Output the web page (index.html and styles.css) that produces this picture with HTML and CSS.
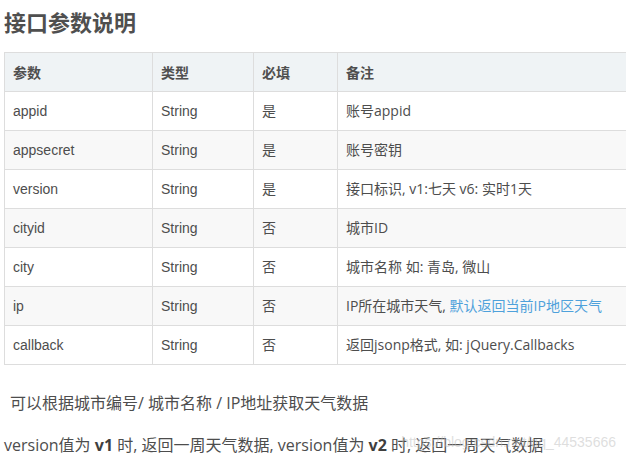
FILE: index.html
```html
<!DOCTYPE html>
<html lang="zh-CN">
<head>
<meta charset="utf-8">
<title>接口参数说明</title>
<link rel="stylesheet" href="styles.css">
</head>
<body>
<div class="page">
  <h3 class="title">接口参数说明</h3>
  <div class="table-wrap">
    <table class="params">
      <thead>
        <tr><th class="c1">参数</th><th class="c2">类型</th><th class="c3">必填</th><th class="c4">备注</th></tr>
      </thead>
      <tbody>
        <tr><td>appid</td><td>String</td><td>是</td><td class="note">账号appid</td></tr>
        <tr><td>appsecret</td><td>String</td><td>是</td><td class="note">账号密钥</td></tr>
        <tr><td>version</td><td>String</td><td>是</td><td class="note">接口标识, v1:七天 v6: 实时1天</td></tr>
        <tr><td>cityid</td><td>String</td><td>否</td><td class="note">城市ID</td></tr>
        <tr><td>city</td><td>String</td><td>否</td><td class="note">城市名称 如: 青岛, 微山</td></tr>
        <tr><td>ip</td><td>String</td><td>否</td><td class="note">IP所在城市天气, <a class="link" href="#">默认返回当前IP地区天气</a></td></tr>
        <tr><td>callback</td><td>String</td><td>否</td><td class="note">返回jsonp格式, 如: jQuery.Callbacks</td></tr>
      </tbody>
    </table>
  </div>
  <p class="para indent">可以根据城市编号/ 城市名称 / IP地址获取天气数据</p>
  <p class="para">version值为 <strong>v1</strong> 时, 返回一周天气数据, version值为 <strong>v2</strong> 时, 返回一周天气数据</p>
  <div class="watermark">https://blog.csdn.net/qq_44535666</div>
</div>
</body>
</html>
```
FILE: styles.css
```css
html, body {
  margin: 0;
  padding: 0;
  background: #ffffff;
  overflow: hidden;
}
.page {
  position: relative;
  padding: 0 0 0 4px;
  width: 622px;
  height: 461px;
  overflow: hidden;
  color: #4d4d4d;
  font-family: "Liberation Sans", "Noto Sans CJK SC", sans-serif;
}
.title {
  margin: 0;
  padding-top: 6px;
  font-family: "Noto Sans CJK SC", sans-serif;
  font-size: 22px;
  line-height: 30px;
  font-weight: 700;
  color: #4f4f4f;
  height: 46px;
}
.table-wrap {
  width: 100%;
  overflow: hidden;
}
.params {
  border-collapse: collapse;
  width: 700px;
  font-size: 14px;
  table-layout: fixed;
}
.params th, .params td {
  border: 1px solid #dddddd;
  padding: 8px 8px;
  line-height: 22px;
  text-align: left;
  vertical-align: middle;
}
.params th {
  background: #eff3f5;
  font-weight: 700;
  font-family: "Noto Sans CJK SC", sans-serif;
  color: #4f4f4f;
}
.params tbody tr:nth-child(even) td {
  background: #f8f8f8;
}
.c1 { width: 131px; }
.c2 { width: 84px; }
.c3 { width: 67px; }
.note {
  font-family: "Open Sans", "Noto Sans CJK SC", sans-serif;
  font-size: 14px;
}
.link {
  color: #4ea1db;
  text-decoration: none;
}
.para {
  margin: 0;
  font-family: "Open Sans", "Noto Sans CJK SC", sans-serif;
  font-size: 16px;
  line-height: 24px;
  color: #4d4d4d;
}
.para.indent {
  padding-left: 6px;
  margin-top: 26px;
}
.para + .para {
  margin-top: 18px;
}
.para strong {
  font-weight: 700;
  color: #3f3f3f;
}
.watermark {
  position: absolute;
  right: 10px;
  top: 433px;
  font-family: "Liberation Sans", sans-serif;
  font-size: 14px;
  line-height: 18px;
  color: rgba(190, 190, 190, 0.5);
  white-space: nowrap;
}
```
